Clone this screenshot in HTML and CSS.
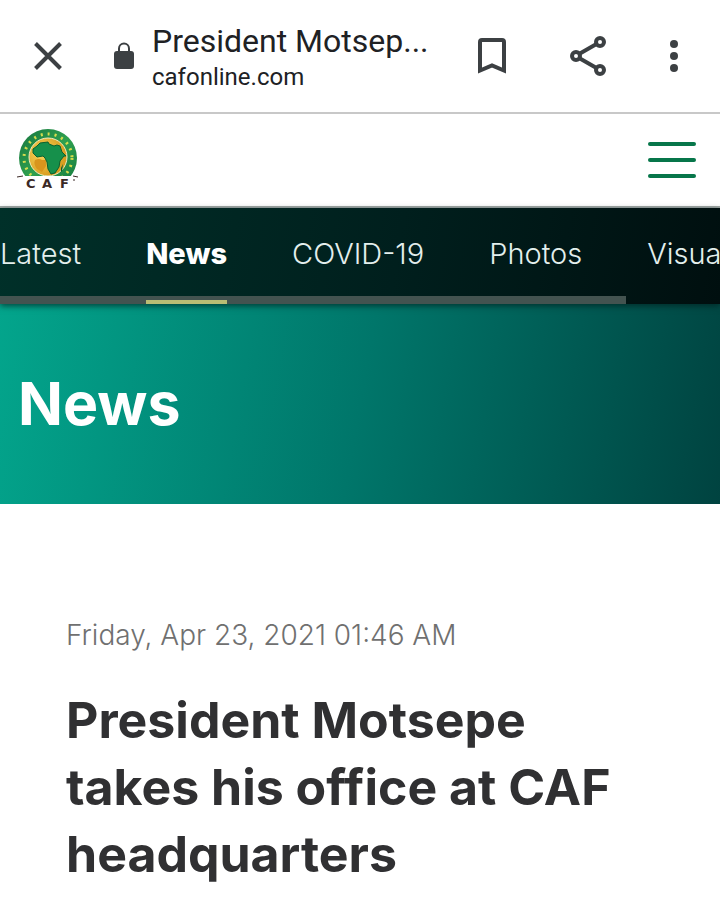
FILE: index.html
```html
<!DOCTYPE html>
<html lang="en">
<head>
    <meta charset="UTF-8">
    <meta name="viewport" content="width=device-width, initial-scale=1.0">
    <title>President Motsepe takes his office at CAF headquarters</title>
    <link rel="stylesheet" href="styles.css">
</head>
<body>
    <!-- Browser bar -->
    <div class="browser-bar">
        <button class="icon-btn" aria-label="Close">
            <svg width="48" height="48" viewBox="0 0 48 48" fill="none" stroke="#3c4043" stroke-width="4">
                <path d="M11.500 11.500 36.500 36.500M36.500 11.500 11.500 36.500"/>
            </svg>
        </button>
        <svg class="lock" width="20" height="28" viewBox="0 0 20 28">
            <path d="M5 10V6.500a5 5 0 0 1 10 0V10" fill="none" stroke="#3c4043" stroke-width="2"/>
            <rect y="9" width="20" height="18" rx="3" fill="#3c4043"/>
        </svg>
        <div class="page-info">
            <div class="page-title">President Motsep...</div>
            <div class="page-host">cafonline.com</div>
        </div>
        <div class="browser-actions">
            <button class="icon-btn" aria-label="Bookmark">
                <svg width="48" height="48" viewBox="0 0 48 48" fill="none" stroke="#3c4043" stroke-width="4">
                    <path d="M12 38.500V10q0-2 2-2h20q2 0 2 2v28.500L24 33.500Z"/>
                </svg>
            </button>
            <button class="icon-btn" aria-label="Share">
                <svg width="48" height="48" viewBox="0 0 48 48" fill="none" stroke="#3c4043" stroke-width="4">
                    <path d="M15.500 21.800 32.500 12M15.500 26.200 32.500 36"/>
                    <circle cx="12" cy="24" r="4"/>
                    <circle cx="36" cy="10" r="4"/>
                    <circle cx="36" cy="38" r="4"/>
                </svg>
            </button>
            <button class="icon-btn" aria-label="More options">
                <svg width="48" height="48" viewBox="0 0 48 48" fill="#3c4043">
                    <circle cx="24" cy="12" r="4"/>
                    <circle cx="24" cy="24" r="4"/>
                    <circle cx="24" cy="36" r="4"/>
                </svg>
            </button>
        </div>
    </div>

    <header class="site-header">
        <a href="#home" class="logo" aria-label="CAF">
            <svg width="64" height="64" viewBox="0 0 64 64">
                <defs>
                    <linearGradient id="ring" x1="0" y1="0" x2="1" y2="1">
                        <stop offset="0" stop-color="#16753f"/>
                        <stop offset="0.5" stop-color="#2fa04f"/>
                        <stop offset="1" stop-color="#157a3f"/>
                    </linearGradient>
                    <radialGradient id="globe" cx="0.35" cy="0.4" r="0.7">
                        <stop offset="0" stop-color="#f8d65c"/>
                        <stop offset="1" stop-color="#d49517"/>
                    </radialGradient>
                    <clipPath id="dome">
                        <rect width="64" height="48"/>
                    </clipPath>
                </defs>
                <g clip-path="url(#dome)">
                    <circle cx="32" cy="30" r="29" fill="url(#ring)"/>
                    <circle cx="32" cy="30" r="24" fill="none" stroke="#d5dc4e" stroke-width="3" stroke-dasharray="2 5"/>
                    <circle cx="32" cy="29" r="19" fill="url(#globe)" stroke="#f4ecc0"/>
                    <path d="M19 32q4-2 7 0h4v6l-4 6-5-3q-4-5-2-9Z" fill="#d8951d"/>
                </g>
                <path d="M21 18l3-3 8-1 1 2 5 2 3-1 3 1 2 6 4 4h-2l-4 5-1 6-4 6-4 1-3-5-1-7-2-4-2-2-6 1-4-4v-4Z" fill="#16904b" stroke="#08602f"/>
                <path d="M45 40l2-4-1 7-1 1Z" fill="#075c30"/>
                <path d="M1 49l6-1M57 48l5 1" stroke="#3b2926"/>
                <text x="10" y="60" class="logo-text">C</text>
                <text x="26" y="60" class="logo-text">A</text>
                <text x="44" y="60" class="logo-text">F</text>
                <path d="M58 51v2" stroke="#3b2926"/>
            </svg>
        </a>
        <button class="menu-btn" aria-label="Menu">
            <span></span>
            <span></span>
            <span></span>
        </button>
    </header>

    <nav class="tabs">
        <ul>
            <li><a href="#latest">Latest</a></li>
            <li><a href="#news" class="active">News</a></li>
            <li><a href="#covid">COVID-19</a></li>
            <li><a href="#photos">Photos</a></li>
            <li><a href="#visuals">Visuals</a></li>
        </ul>
        <div class="scroll-thumb"></div>
    </nav>

    <section class="banner">
        <h1>News</h1>
    </section>

    <main class="article">
        <p class="date">Friday, Apr 23, 2021 01:46 AM</p>
        <h2>President Motsepe takes his office at CAF headquarters</h2>
    </main>
</body>
</html>
```

FILE: styles.css
```css
* {
    margin: 0;
    padding: 0;
    box-sizing: border-box;
}

body {
    font-family: Inter, "Open Sans", sans-serif;
    background-color: white;
    color: #303032;
}

button {
    background: none;
    border: none;
    cursor: pointer;
}

svg {
    display: block;
}

/* Browser bar */
.browser-bar {
    display: flex;
    align-items: center;
    height: 114px;
    padding: 0 22px 0 24px;
    border-bottom: 2px solid #c8c8c8;
    font-family: Roboto, sans-serif;
    color: #202124;
}

.icon-btn {
    width: 48px;
    height: 48px;
}

.lock {
    margin: 0 18px 0 42px;
}

.page-info {
    padding-top: 2px;
}

.page-title {
    font-size: 32px;
    line-height: 40px;
    white-space: nowrap;
}

.page-host {
    font-size: 24px;
    line-height: 32px;
}

.browser-actions {
    display: flex;
    gap: 48px;
    margin-left: auto;
}

.browser-actions .icon-btn:last-child {
    margin-left: -10px;
}

/* Site header */
.site-header {
    display: flex;
    align-items: center;
    justify-content: space-between;
    height: 94px;
    padding: 0 24px 0 16px;
    border-bottom: 2px solid #a3aaa8;
}

.logo-text {
    font: bold 13px "DejaVu Sans", sans-serif;
    fill: #3b2926;
}

.menu-btn {
    display: flex;
    flex-direction: column;
    gap: 12px;
    width: 48px;
}

.menu-btn span {
    height: 4px;
    border-radius: 2px;
    background-color: #07764a;
}

/* Tabs */
.tabs {
    position: relative;
    height: 96px;
    background: linear-gradient(100deg, #003029, #001f1d 55%, #000f0f);
    box-shadow: 0 2px 6px rgba(0, 30, 28, 0.7);
}

.tabs ul {
    display: flex;
    gap: 65px;
    height: 100%;
    overflow: hidden;
    list-style: none;
}

.tabs a {
    display: block;
    position: relative;
    z-index: 1;
    height: 96px;
    border-bottom: 4px solid transparent;
    font-size: 29px;
    font-weight: 300;
    line-height: 92px;
    white-space: nowrap;
    color: #e3efed;
    text-decoration: none;
}

.tabs .active {
    border-color: #b9bd74;
    font-weight: 800;
    color: white;
}

.scroll-thumb {
    position: absolute;
    left: 0;
    bottom: 0;
    width: 87%;
    height: 8px;
    background-color: #435350;
}

/* Banner */
.banner {
    display: flex;
    align-items: center;
    height: 200px;
    padding: 0 18px;
    background: linear-gradient(100deg, #03a58c, #00766a 50%, #004340);
}

.banner h1 {
    font-size: 59px;
    line-height: 64px;
    color: white;
}

/* Article */
.article {
    padding: 111px 66px 32px;
}

.date {
    margin-bottom: 32px;
    font-size: 28px;
    font-weight: 300;
    line-height: 40px;
    color: #707070;
}

.article h2 {
    font-size: 50px;
    line-height: 67px;
}
```
